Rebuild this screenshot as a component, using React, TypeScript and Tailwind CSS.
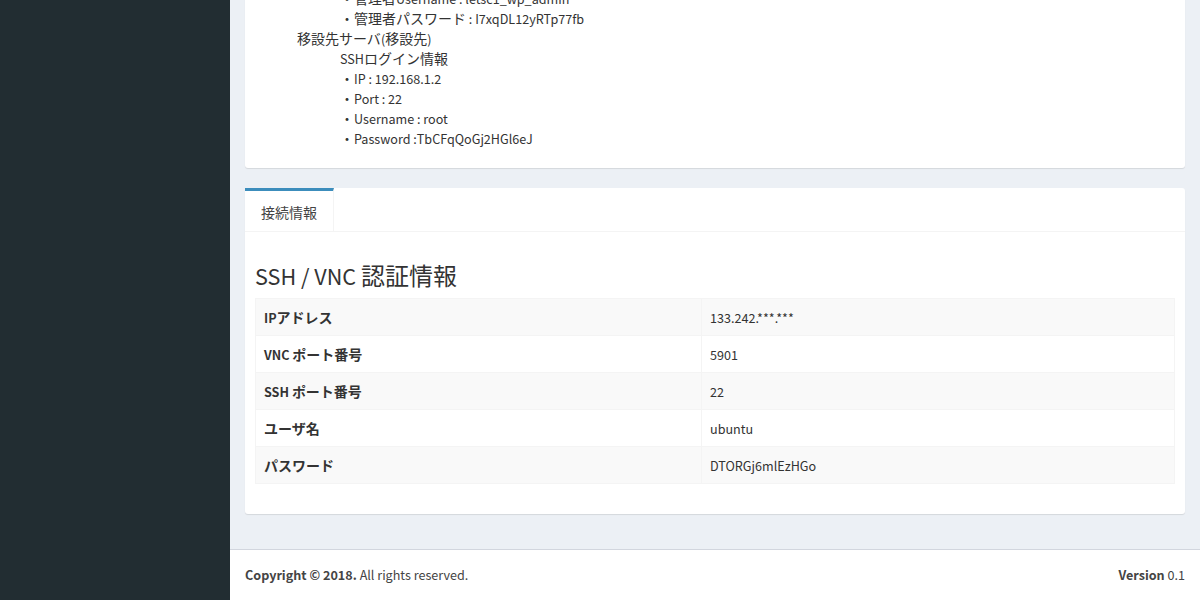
import React from "react";

const font = { fontFamily: '"Noto Sans CJK JP", "Noto Sans", sans-serif' };

const CJK = /([\u3000-\u30ff\u3400-\u9fff\uff00-\uffef]+)/;

function T({ children }: { children: string }) {
  const parts = children.split(CJK).filter((p) => p !== "");
  return (
    <>
      {parts.map((p, i) =>
        CJK.test(p) ? (
          <span key={i}>{p}</span>
        ) : (
          <span key={i} className="text-[0.9em] leading-none">
            {p}
          </span>
        )
      )}
    </>
  );
}

const rows: [string, string][] = [
  ["IPアドレス", "133.242.***.***"],
  ["VNC ポート番号", "5901"],
  ["SSH ポート番号", "22"],
  ["ユーザ名", "ubuntu"],
  ["パスワード", "DTORGj6mlEzHGo"],
];

export default function App() {
  return (
    <div className="flex h-[600px] w-[1200px] overflow-hidden text-[14px] leading-[20px] text-[#333]" style={font}>
      <aside className="w-[230px] shrink-0 bg-[#222d32]" />
      <div className="flex flex-1 flex-col bg-[#ecf0f5]">
        <main className="flex flex-1 flex-col px-[15px] pb-[15px]">
          <section className="-mt-[12px] mb-[20px] rounded-b-[3px] bg-white pb-[20px] pl-[10px] shadow-[0_1px_1px_rgba(0,0,0,0.1)]">
            <div className="pl-[85px]"><T>・管理者Username : letsc1_wp_admin</T></div>
            <div className="pl-[85px]"><T>・管理者パスワード : I7xqDL12yRTp77fb</T></div>
            <div className="pl-[42px]"><T>移設先サーバ(移設先)</T></div>
            <div className="pl-[85px]"><T>SSHログイン情報</T></div>
            <div className="pl-[85px]"><T>・IP : 192.168.1.2</T></div>
            <div className="pl-[85px]"><T>・Port : 22</T></div>
            <div className="pl-[85px]"><T>・Username : root</T></div>
            <div className="pl-[85px]"><T>・Password :TbCFqQoGj2HGl6eJ</T></div>
          </section>
          <section className="rounded-[3px] bg-white shadow-[0_1px_1px_rgba(0,0,0,0.1)]">
            <div className="flex border-b border-[#f4f4f4]">
              <div className="border-r border-t-[3px] border-r-[#f4f4f4] border-t-[#3c8dbc] px-[16px] pb-[9px] pt-[11px] text-[#444]">
                接続情報
              </div>
            </div>
            <div className="p-[10px]">
              <h3 className="mb-[10px] mt-[20px] text-[24px] font-normal leading-[26px] text-[#333]">
                <T>SSH / VNC 認証情報</T>
              </h3>
              <table className="mb-[20px] w-full border-collapse border border-[#f4f4f4]">
                <tbody>
                  {rows.map(([k, v], i) => (
                    <tr key={k} className={i % 2 === 0 ? "bg-[#f9f9f9]" : "bg-white"}>
                      <td className="w-[446px] border border-[#f4f4f4] p-[8px] font-bold leading-[20px]">
                        <T>{k}</T>
                      </td>
                      <td className="border border-[#f4f4f4] p-[8px] leading-[20px]">
                        <T>{v}</T>
                      </td>
                    </tr>
                  ))}
                </tbody>
              </table>
            </div>
          </section>
        </main>
        <footer className="flex h-[51px] shrink-0 items-center justify-between border-t border-[#d2d6de] bg-white px-[15px] text-[#444]">
          <div className="text-[0.9em]">
            <b>Copyright © 2018.</b> All rights reserved.
          </div>
          <div className="text-[0.9em]">
            <b>Version</b> 0.1
          </div>
        </footer>
      </div>
    </div>
  );
}
